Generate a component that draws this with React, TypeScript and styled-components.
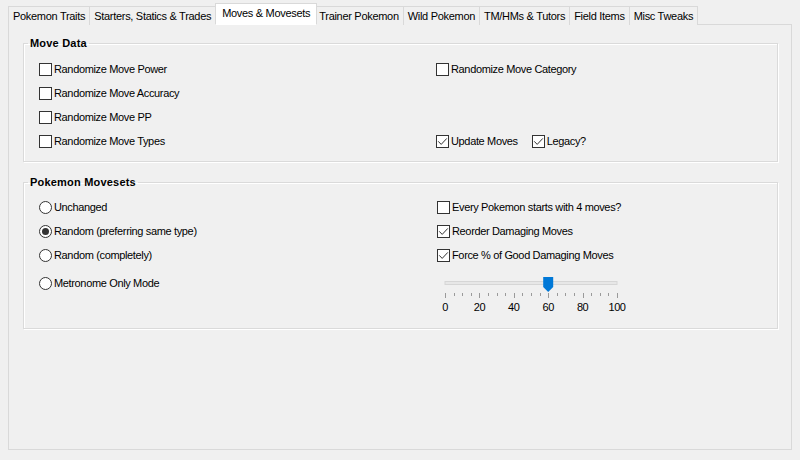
import React from "react";
import styled, { createGlobalStyle } from "styled-components";

const Global = createGlobalStyle`
  html, body { margin: 0; padding: 0; background: #f0f0f0; }
  body {
    font-family: "Liberation Sans", Arial, sans-serif;
    font-size: 11px;
    color: #000;
  }
  * { box-sizing: border-box; }
`;

const Page = styled.div`
  width: 800px;
  height: 460px;
  padding: 3px 8px 10px 8px;
  display: flex;
  flex-direction: column;
`;

const TabBar = styled.div`
  display: flex;
  align-items: flex-end;
  height: 22px;
  padding-left: 1px;
  margin-bottom: -1px;
  position: relative;
  z-index: 1;
`;

const Tab = styled.div<{ $active?: boolean }>`
  height: ${(p) => (p.$active ? 22 : 19)}px;
  padding: 0 ${(p) => (p.$active ? 6 : 4)}px;
  margin: 0 ${(p) => (p.$active ? -2 : 0)}px 0 -1px;
  position: relative;
  z-index: ${(p) => (p.$active ? 2 : 1)};
  display: flex;
  align-items: center;
  padding-bottom: ${(p) => (p.$active ? 2 : 0)}px;
  border: 1px solid #d9d9d9;
  border-bottom: ${(p) => (p.$active ? "1px solid #fff" : "none")};
  background: ${(p) => (p.$active ? "#fff" : "#f0f0f0")};
  letter-spacing: -0.3px;
  white-space: nowrap;
`;

const Panel = styled.div`
  flex: 1;
  border: 1px solid #d9d9d9;
  background: #f0f0f0;
  padding: 11px 13px 0 14px;
  display: flex;
  flex-direction: column;
  gap: 13px;
`;

const Group = styled.fieldset`
  margin: 0;
  padding: 0;
  min-width: 0;
  border: 1px solid #dadada;
  box-shadow: inset 1px 1px 0 #fff, 1px 1px 0 #fff;
`;

const Legend = styled.legend`
  margin-left: 4px;
  padding: 0 2px;
  font-weight: bold;
  font-size: 11px;
  line-height: 14px;
  letter-spacing: 0.2px;
`;

const MoveGrid = styled.div`
  display: grid;
  grid-template-columns: 397px 1fr;
  grid-auto-rows: 24px;
  padding: 7px 0 8px 15px;
`;

const SetsGrid = styled.div`
  display: grid;
  grid-template-columns: 398px 1fr;
  padding: 6px 0 12px 15px;
`;

const Column = styled.div`
  display: flex;
  flex-direction: column;
`;

const Row = styled.label<{ $gapTop?: number }>`
  display: flex;
  align-items: center;
  height: 24px;
  gap: 2px;
  margin-top: ${(p) => p.$gapTop ?? 0}px;
  letter-spacing: -0.35px;
  white-space: nowrap;
`;

const Inline = styled.div`
  display: flex;
  align-items: center;
  gap: 14px;
`;

const Box = styled.span`
  width: 13px;
  height: 13px;
  border: 1px solid #333;
  background: #fff;
  display: inline-flex;
  align-items: center;
  justify-content: center;
  flex: none;
`;

const Circle = styled.span`
  width: 13px;
  height: 13px;
  border: 1px solid #333;
  border-radius: 50%;
  background: #fff;
  display: inline-flex;
  align-items: center;
  justify-content: center;
  flex: none;
`;

const Dot = styled.span`
  width: 7px;
  height: 7px;
  border-radius: 50%;
  background: #333;
`;

const Empty = styled.div``;

const Check = ({ label, checked }: { label: string; checked?: boolean }) => (
  <Row>
    <Box>
      {checked && (
        <svg width="11" height="11" viewBox="0 0 11 11">
          <path d="M1.2 5.3 L4.2 8.4 L9.8 2.4" fill="none" stroke="#333" strokeWidth="1" />
        </svg>
      )}
    </Box>
    {label}
  </Row>
);

const Radio = ({ label, checked, gapTop }: { label: string; checked?: boolean; gapTop?: number }) => (
  <Row $gapTop={gapTop}>
    <Circle>{checked && <Dot />}</Circle>
    {label}
  </Row>
);

const SliderSvg = styled.svg`
  display: block;
  margin-left: -1px;
  font-family: "Liberation Sans", Arial, sans-serif;
`;

const Slider = () => {
  const x0 = 9;
  const x1 = 181;
  const ticks = Array.from({ length: 21 }, (_, i) => i);
  const pos = x0 + (x1 - x0) * 0.6;
  return (
    <SliderSvg width="190" height="49" viewBox="0 0 190 49">
      <rect x={x0} y={14.5} width={x1 - x0} height={3} fill="#e7e7e7" stroke="#d6d6d6" strokeWidth="1" />
      <path d={`M${pos - 5} 10 h10 v10 l-5 5 l-5 -5 z`} fill="#0078d7" />
      {ticks.map((i) => {
        const x = Math.round(x0 + ((x1 - x0) * i) / 20) + 0.5;
        const major = i % 4 === 0;
        return (
          <line key={i} x1={x} x2={x} y1={26} y2={major ? 31 : 29} stroke="#9a9a9a" strokeWidth="1" />
        );
      })}
      {[0, 20, 40, 60, 80, 100].map((v, i) => (
        <text
          key={v}
          x={x0 + ((x1 - x0) * i) / 5}
          y={44}
          fontSize="11"
          textAnchor="middle"
          letterSpacing="-0.4"
          fill="#000"
        >
          {v}
        </text>
      ))}
    </SliderSvg>
  );
};

const tabs = [
  "Pokemon Traits",
  "Starters, Statics & Trades",
  "Moves & Movesets",
  "Trainer Pokemon",
  "Wild Pokemon",
  "TM/HMs & Tutors",
  "Field Items",
  "Misc Tweaks",
];

export default function App() {
  return (
    <>
      <Global />
      <Page>
        <TabBar>
          {tabs.map((t) => (
            <Tab key={t} $active={t === "Moves & Movesets"}>
              {t}
            </Tab>
          ))}
        </TabBar>
        <Panel>
          <Group>
            <Legend>Move Data</Legend>
            <MoveGrid>
              <Check label="Randomize Move Power" />
              <Check label="Randomize Move Category" />
              <Check label="Randomize Move Accuracy" />
              <Empty />
              <Check label="Randomize Move PP" />
              <Empty />
              <Check label="Randomize Move Types" />
              <Inline>
                <Check label="Update Moves" checked />
                <Check label="Legacy?" checked />
              </Inline>
            </MoveGrid>
          </Group>
          <Group>
            <Legend>Pokemon Movesets</Legend>
            <SetsGrid>
              <Column>
                <Radio label="Unchanged" />
                <Radio label="Random (preferring same type)" checked />
                <Radio label="Random (completely)" />
                <Radio label="Metronome Only Mode" gapTop={4} />
              </Column>
              <Column>
                <Check label="Every Pokemon starts with 4 moves?" />
                <Check label="Reorder Damaging Moves" checked />
                <Check label="Force % of Good Damaging Moves" checked />
                <Slider />
              </Column>
            </SetsGrid>
          </Group>
        </Panel>
      </Page>
    </>
  );
}
